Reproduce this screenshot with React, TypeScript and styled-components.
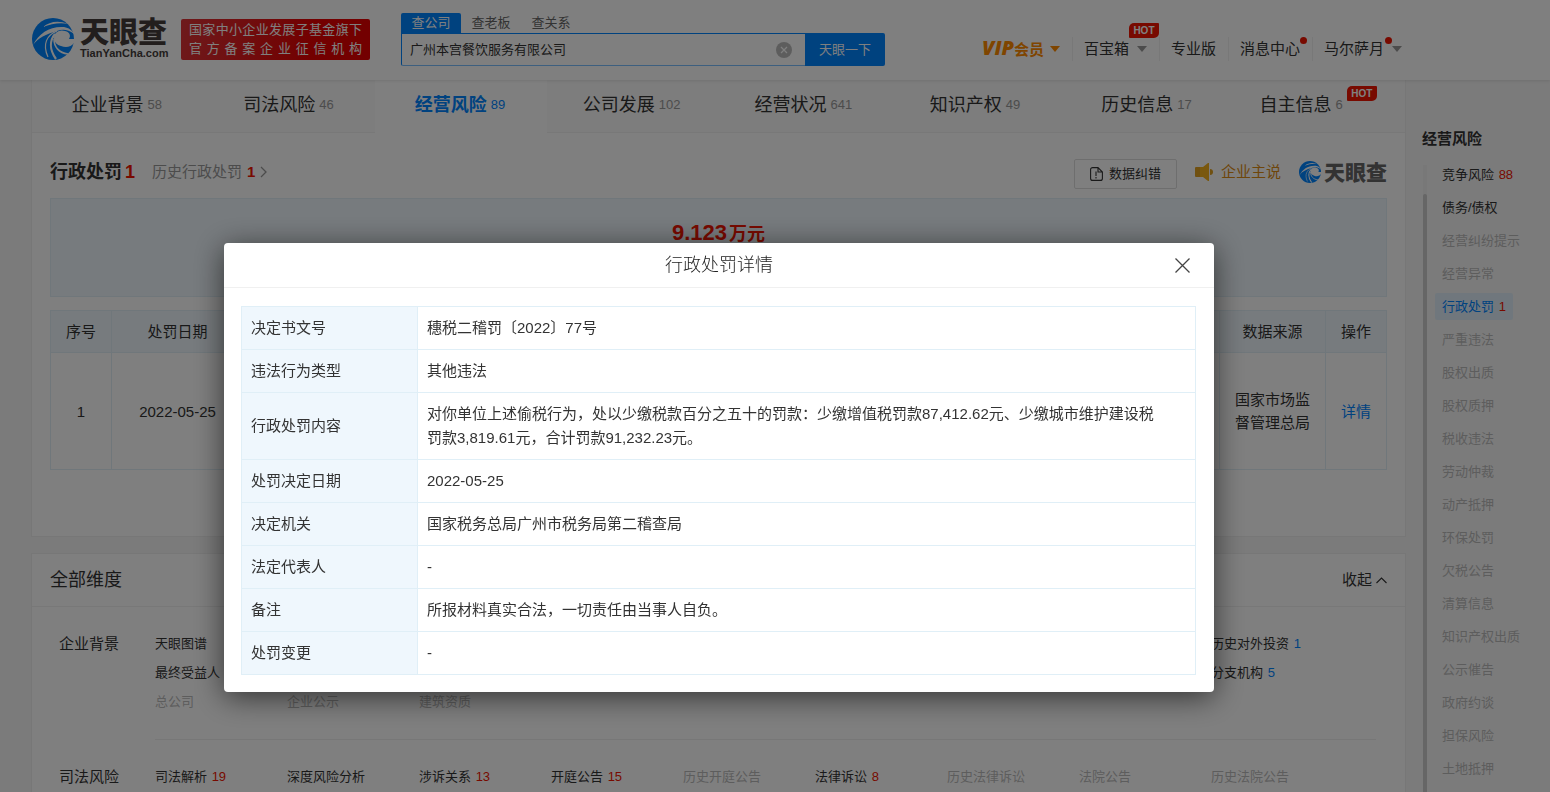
import React from "react";
import styled, { createGlobalStyle, css } from "styled-components";

const GlobalStyle = createGlobalStyle`
  *, *::before, *::after { box-sizing: border-box; }
  body {
    margin: 0;
    overflow: hidden;
    background: #f6f6f6;
    color: #333;
    font-family: "Liberation Sans", "Noto Sans CJK SC", sans-serif;
    font-size: 15px;
    line-height: 24px;
  }
  button, input { font: inherit; color: inherit; margin: 0; padding: 0; border: 0; background: none; }
  button { cursor: pointer; }
  a { color: inherit; text-decoration: none; }
  ul { list-style: none; margin: 0; padding: 0; }
  h1, h2, h3 { margin: 0; font-weight: 400; }
  svg { display: block; flex: none; }
`;

const blue = "#0084ff";
const red = "#f01400";
const line = "#e0eff7";
const tint = "#eff7fd";

const Page = styled.div`
  height: 100vh;
  overflow: hidden;
`;

/* ---------- header ---------- */

const Header = styled.header`
  position: relative;
  z-index: 2;
  display: flex;
  height: 80px;
  padding: 0 144px 0 32px;
  background: #fff;
  box-shadow: 0 1px 3px rgba(0, 0, 0, 0.1);
`;

const Brand = styled.a`
  display: flex;
  align-items: flex-start;
  gap: 6px;
  width: 149px;
  padding-top: 18px;
`;

const BrandText = styled.span`
  display: flex;
  flex-direction: column;
  gap: 5px;
`;

const BrandName = styled.span<{ $small?: boolean }>`
  color: ${(p) => (p.$small ? "#666" : "#443c3a")};
  font-family: "Noto Sans CJK SC", sans-serif;
  font-weight: 900;
  font-size: ${(p) => (p.$small ? 21 : 29)}px;
  line-height: ${(p) => (p.$small ? 20 : 24)}px;
  white-space: nowrap;
`;

const BrandDomain = styled.span`
  color: #443c3a;
  font-weight: 700;
  font-size: 11px;
  line-height: 12px;
`;

const Slogan = styled.div`
  width: 189px;
  height: 41px;
  margin-top: 19px;
  padding: 1px 8px;
  border-radius: 2px;
  background: linear-gradient(100deg, #dc3438, #e60000 70%);
  color: #fff;
  font-size: 13px;
  line-height: 19px;
  text-align-last: justify;
`;

const Search = styled.form`
  width: 484px;
  margin-left: 31px;
  padding-top: 13px;
`;

const SearchTabs = styled.div`
  display: flex;
`;

const SearchTab = styled.button<{ $active?: boolean }>`
  width: 60px;
  height: 20px;
  border-radius: 2px 2px 0 0;
  font-size: 13px;
  line-height: 20px;
  color: ${(p) => (p.$active ? "#fff" : "#666")};
  background: ${(p) => (p.$active ? blue : "transparent")};
`;

const SearchRow = styled.div`
  display: flex;
  height: 33px;
`;

const SearchField = styled.div`
  display: flex;
  flex: 1;
  align-items: center;
  padding: 0 13px 0 8px;
  border: 1px solid ${blue};
  border-right: 0;
  border-bottom-color: #7abfff;
  border-radius: 0 0 0 2px;
`;

const SearchInput = styled.input`
  flex: 1;
  min-width: 0;
  outline: 0;
  font-size: 13px;
`;

const SearchSubmit = styled.button`
  width: 80px;
  border-radius: 0 2px 2px 0;
  background: ${blue};
  color: #fff;
  font-size: 13px;
`;

const Nav = styled.nav`
  display: flex;
  align-items: center;
  height: 24px;
  margin: 37px 4px 0 auto;
`;

const NavLink = styled.a<{ $vip?: boolean }>`
  position: relative;
  display: flex;
  align-items: center;
  gap: 8px;
  padding: 0 12px 0 11px;
  white-space: nowrap;
  & + & { border-left: 1px solid #f0f0f0; }
  &:last-child { padding-right: 0; }
  ${(p) => p.$vip && css`
    color: #ff8a00;
    font-weight: 700;
    gap: 6px;
    i { font: italic 800 20px/24px "Open Sans", sans-serif; }
  `}
`;

const Caret = styled.span`
  border: 5px solid transparent;
  border-top: 6px solid currentColor;
  border-bottom: 0;
  &.grey { color: #999; }
`;

const hot = css`
  width: 30px;
  height: 15px;
  border-radius: 5px 1px 5px 1px;
  background: ${red};
  color: #fff;
  font-weight: 700;
  font-size: 10px;
  line-height: 15px;
  text-align: center;
`;

const NavHot = styled.span`
  ${hot}
  position: absolute;
  top: -14px;
  right: 0;
`;

const Dot = styled.span<{ $inset?: boolean }>`
  position: absolute;
  top: 0;
  right: ${(p) => (p.$inset ? 10 : 5)}px;
  width: 7px;
  height: 7px;
  border-radius: 50%;
  background: ${red};
`;

/* ---------- page body ---------- */

const Body = styled.div`
  display: flex;
  padding-left: 31px;
`;

const Main = styled.main`
  flex: 1;
  min-width: 0;
`;

const Card = styled.section`
  border: 1px solid #efefef;
  border-top-width: 0;
  background: #fff;
  & + & { margin-top: 16px; border-top-width: 1px; }
`;

const Tabs = styled.nav`
  display: grid;
  grid-template-columns: repeat(8, 1fr);
  height: 53px;
`;

const Tab = styled.a<{ $active?: boolean }>`
  display: flex;
  align-items: flex-start;
  justify-content: center;
  gap: 4px;
  padding: 13px 2px 0 0;
  border-bottom: 1px solid ${(p) => (p.$active ? "#fff" : "#f0f0f0")};
  background: ${(p) => (p.$active ? "#fff" : "#fafafa")};
  color: ${(p) => (p.$active ? blue : "#333")};
  font-size: 18px;
  font-weight: ${(p) => (p.$active ? 700 : 400)};
  white-space: nowrap;
  small {
    color: ${(p) => (p.$active ? blue : "#999")};
    font-size: 13px;
    font-weight: 400;
  }
`;

const TabHot = styled.span`
  ${hot}
  margin-top: -7px;
`;

const Penalty = styled.div`
  height: 403px;
  padding: 24px 18px 0;
`;

const TitleRow = styled.div`
  display: flex;
  align-items: center;
  height: 30px;
  white-space: nowrap;
`;

const Title = styled.h2`
  display: flex;
  gap: 3px;
  font-size: 18px;
  font-weight: 700;
`;

const Num = styled.span<{ $tone?: "blue" | "red" }>`
  color: ${(p) => (p.$tone === "blue" ? blue : red)};
`;

const HistoryLink = styled.a`
  display: flex;
  align-items: center;
  gap: 5px;
  margin-left: 17px;
  color: #999;
  ${Num} { font-weight: 700; }
`;

const Tools = styled.div`
  display: flex;
  align-items: center;
  margin-left: auto;
`;

const FixButton = styled.button`
  display: flex;
  align-items: center;
  justify-content: center;
  gap: 6px;
  width: 103px;
  height: 30px;
  margin-top: 4px;
  border: 1px solid #ddd;
  border-radius: 2px;
  font-size: 13px;
`;

const OwnerLink = styled.a`
  display: flex;
  align-items: center;
  gap: 8px;
  margin: 0 18px;
  color: #dc8c14;
`;

const MiniBrand = styled.span`
  display: flex;
  align-items: flex-start;
  gap: 3px;
`;

const Amount = styled.div`
  height: 99px;
  margin-top: 11px;
  padding-top: 20px;
  border: 1px solid ${line};
  background: ${tint};
  color: ${red};
  font-weight: 700;
  font-size: 18px;
  line-height: 28px;
  text-align: center;
  b { margin-right: 2px; font-size: 22px; }
`;

const PenaltyTable = styled.table`
  width: 100%;
  margin-top: 13px;
  border-collapse: collapse;
  table-layout: fixed;
  text-align: center;
  th, td {
    padding: 0;
    border: 1px solid ${line};
    font-weight: 400;
  }
  th { height: 42px; background: ${tint}; }
  td { height: 117px; line-height: 23px; }
  td:nth-child(4) { padding: 0 12px; }
`;

const Col = styled.col<{ $width?: number }>`
  width: ${(p) => (p.$width ? `${p.$width}px` : "auto")};
`;

const DetailLink = styled.a`
  color: ${blue};
`;

const DimensionHead = styled.div`
  display: flex;
  align-items: center;
  justify-content: space-between;
  height: 53px;
  padding: 0 18px;
  border-bottom: 1px solid #f0f0f0;
  h2 { font-size: 18px; }
`;

const Collapse = styled.button`
  display: flex;
  align-items: center;
  gap: 4px;
`;

const DimensionRow = styled.div`
  display: flex;
  padding: 22px 29px 0 27px;
  h3 { width: 96px; font-size: 15px; line-height: 29px; }
`;

const DimensionGrid = styled.ul`
  display: grid;
  flex: 1;
  grid-template-columns: repeat(9, 1fr);
  grid-auto-rows: 29px;
  padding: 0 33px 23px 0;
  border-bottom: 1px solid #eee;
  font-size: 13px;
  line-height: 29px;
  white-space: nowrap;
  ${Num} { margin-left: 1px; }
`;

const DimensionItem = styled.li<{ $col: number; $row: number; $off?: boolean }>`
  grid-column: ${(p) => p.$col};
  grid-row: ${(p) => p.$row};
  color: ${(p) => (p.$off ? "#bbb" : "#333")};
`;

/* ---------- side index ---------- */

const Aside = styled.aside`
  width: 144px;
  padding: 47px 0 0 16px;
  h2 { font-size: 15px; font-weight: 700; }
`;

const SideBody = styled.div`
  display: flex;
  gap: 8px;
  margin-top: 14px;
`;

const Rail = styled.div`
  width: 4px;
  margin-left: 1px;
  padding-top: 29px;
  background: #f0f0f0;
  &::before {
    content: "";
    display: block;
    height: 100%;
    border-radius: 2px;
    background: #ccc;
  }
`;

const SideList = styled.ul`
  margin-top: -7px;
  padding-bottom: 40px;
  font-size: 13px;
  white-space: nowrap;
`;

const SideItem = styled.li<{ $state?: "off" | "active" }>`
  padding: 3px 0;
  a {
    display: inline-block;
    height: 27px;
    padding: 0 7px;
    border-radius: 2px;
    line-height: 27px;
    color: ${(p) => (p.$state === "off" ? "#bbb" : p.$state === "active" ? blue : "#333")};
    background: ${(p) => (p.$state === "active" ? "#e1effa" : "transparent")};
  }
  ${Num} { margin-left: 1px; }
`;

/* ---------- dialog ---------- */

const Overlay = styled.div`
  position: fixed;
  inset: 0;
  z-index: 10;
  padding: 243px 112px 0 0;
  background: rgba(0, 0, 0, 0.5);
`;

const Dialog = styled.div`
  width: 990px;
  max-width: 100%;
  margin: 0 auto;
  border-radius: 4px;
  background: #fff;
  box-shadow: 0 5px 30px rgba(0, 0, 0, 0.6);
`;

const DialogHead = styled.div`
  display: grid;
  grid-template-columns: 1fr auto 1fr;
  align-items: center;
  height: 45px;
  padding: 0 24px;
  border-bottom: 1px solid #f0f0f0;
  h1 { grid-column: 2; color: #222; font-size: 18px; font-weight: 300; }
`;

const Close = styled.button`
  justify-self: end;
`;

const DialogBody = styled.div`
  padding: 18px 18px 17px 17px;
`;

const DetailTable = styled.table`
  width: 100%;
  border-collapse: collapse;
  table-layout: fixed;
  th, td {
    padding: 9px;
    border: 1px solid ${line};
    font-weight: 400;
    text-align: left;
    white-space: pre-line;
  }
  th { width: 176px; background: ${tint}; }
`;

const LogoMark = ({ size }: { size: number }) => (
  <svg width={size} height={size} viewBox="0 0 42 42" aria-hidden="true">
    <circle cx="21" cy="21" r="21" fill={blue} />
    <path d="M11 9C17 4 26 2 36 6 28 4 19 6 11 9z" fill="#fff" />
    <path d="M1 27C7 15 18 8 32 9 37 10 40 12 42 16 36 11 30 11 25 13 14 16 6 20 1 27z" fill="#fff" />
    <path d="M22 20C22 14 28 11 33 13 38 14 39 18 37 21H42V25C39 29 34 30 29 28 25 27 22 24 22 20z" fill="#fff" />
    <path d="M25 13C15 17 10 26 16 39" fill="none" stroke="#fff" strokeWidth="1.2" />
    <path d="M23 16C18 22 17 31 24 41" fill="none" stroke="#fff" strokeWidth="2.2" />
    <path d="M22 21C22 29 27 35 36 36" fill="none" stroke="#fff" strokeWidth="1.6" />
  </svg>
);

const background: [number, number, string, boolean, number?][] = [
  [1, 1, "天眼图谱", false],
  [9, 1, "历史对外投资", false, 1],
  [1, 2, "最终受益人", false],
  [9, 2, "分支机构", false, 5],
  [1, 3, "总公司", true],
  [2, 3, "企业公示", true],
  [3, 3, "建筑资质", true],
];

const judicial: [number, number, string, boolean, number?][] = [
  [1, 1, "司法解析", false, 19],
  [2, 1, "深度风险分析", false],
  [3, 1, "涉诉关系", false, 13],
  [4, 1, "开庭公告", false, 15],
  [5, 1, "历史开庭公告", true],
  [6, 1, "法律诉讼", false, 8],
  [7, 1, "历史法律诉讼", true],
  [8, 1, "法院公告", true],
  [9, 1, "历史法院公告", true],
];

const tabs: [string, number][] = [
  ["企业背景", 58],
  ["司法风险", 46],
  ["经营风险", 89],
  ["公司发展", 102],
  ["经营状况", 641],
  ["知识产权", 49],
  ["历史信息", 17],
  ["自主信息", 6],
];

const sideOff = [
  "严重违法", "股权出质", "股权质押", "税收违法", "劳动仲裁", "动产抵押", "环保处罚",
  "欠税公告", "清算信息", "知识产权出质", "公示催告", "政府约谈", "担保风险", "土地抵押",
];

const details: [string, string][] = [
  ["决定书文号", "穗税二稽罚〔2022〕77号"],
  ["违法行为类型", "其他违法"],
  ["行政处罚内容", "对你单位上述偷税行为，处以少缴税款百分之五十的罚款：少缴增值税罚款87,412.62元、少缴城市维护建设税\n罚款3,819.61元，合计罚款91,232.23元。"],
  ["处罚决定日期", "2022-05-25"],
  ["决定机关", "国家税务总局广州市税务局第二稽查局"],
  ["法定代表人", "-"],
  ["备注", "所报材料真实合法，一切责任由当事人自负。"],
  ["处罚变更", "-"],
];

const Dimensions = ({ name, items, tone }: { name: string; items: typeof background; tone: "blue" | "red" }) => (
  <DimensionRow>
    <h3>{name}</h3>
    <DimensionGrid>
      {items.map(([col, row, text, off, count]) => (
        <DimensionItem key={text} $col={col} $row={row} $off={off}>
          <a href="#">{text}{count && <Num $tone={tone}> {count}</Num>}</a>
        </DimensionItem>
      ))}
    </DimensionGrid>
  </DimensionRow>
);

export default function App() {
  return (
    <Page>
      <GlobalStyle />
      <Header>
        <Brand href="#">
          <LogoMark size={42} />
          <BrandText>
            <BrandName>天眼查</BrandName>
            <BrandDomain>TianYanCha.com</BrandDomain>
          </BrandText>
        </Brand>
        <Slogan>
          <div>国家中小企业发展子基金旗下</div>
          <div>官方备案企业征信机构</div>
        </Slogan>
        <Search onSubmit={(e) => e.preventDefault()}>
          <SearchTabs>
            <SearchTab type="button" $active>查公司</SearchTab>
            <SearchTab type="button">查老板</SearchTab>
            <SearchTab type="button">查关系</SearchTab>
          </SearchTabs>
          <SearchRow>
            <SearchField>
              <SearchInput aria-label="查公司" defaultValue="广州本宫餐饮服务有限公司" />
              <button type="button" aria-label="清除">
                <svg width="16" height="16" viewBox="0 0 16 16">
                  <circle cx="8" cy="8" r="8" fill="#bbb" />
                  <path d="M5 5l6 6M11 5l-6 6" stroke="#fff" strokeWidth="1.2" />
                </svg>
              </button>
            </SearchField>
            <SearchSubmit type="submit">天眼一下</SearchSubmit>
          </SearchRow>
        </Search>
        <Nav>
          <NavLink href="#" $vip><span><i>VIP</i>会员</span><Caret /></NavLink>
          <NavLink href="#">百宝箱<Caret className="grey" /><NavHot>HOT</NavHot></NavLink>
          <NavLink href="#">专业版</NavLink>
          <NavLink href="#">消息中心<Dot /></NavLink>
          <NavLink href="#">马尔萨月<Caret className="grey" /><Dot $inset /></NavLink>
        </Nav>
      </Header>

      <Body>
        <Main>
          <Card>
            <Tabs>
              {tabs.map(([name, count]) => (
                <Tab key={name} href="#" $active={name === "经营风险"}>
                  {name}<small>{count}</small>
                  {name === "自主信息" && <TabHot>HOT</TabHot>}
                </Tab>
              ))}
            </Tabs>
            <Penalty>
              <TitleRow>
                <Title>行政处罚<Num>1</Num></Title>
                <HistoryLink href="#">
                  历史行政处罚 <Num>1</Num>
                  <svg width="7" height="12" viewBox="0 0 7 12" fill="none" stroke="#999" strokeWidth="1.3"><path d="M1 1l5 5-5 5" /></svg>
                </HistoryLink>
                <Tools>
                  <FixButton type="button">
                    <svg width="13" height="14" viewBox="0 0 13 14" fill="none" stroke="#333" strokeWidth="1.1">
                      <path d="M8 .6H2.600a2 2 0 0 0-2 2v8.800a2 2 0 0 0 2 2h7.800a2 2 0 0 0 2-2V5zM8 .6V5h4.400M6 4.500v4.500M6 10v1.500" />
                    </svg>
                    数据纠错
                  </FixButton>
                  <OwnerLink href="#">
                    <svg width="18" height="18" viewBox="0 0 18 18">
                      <path d="M1 4h4v10H1a1 1 0 0 1-1-1V5a1 1 0 0 1 1-1z" fill="#e0a020" />
                      <path d="M5 4h3l5-4h1v18h-1l-5-4H5z" fill="#f5b01c" />
                      <path d="M15 6a3 3 0 0 1 0 6z" fill="#e0a020" />
                    </svg>
                    企业主说
                  </OwnerLink>
                  <MiniBrand><LogoMark size={22} /><BrandName $small>天眼查</BrandName></MiniBrand>
                </Tools>
              </TitleRow>
              <Amount><b>9.123</b>万元</Amount>
              <PenaltyTable>
                <colgroup>
                  <Col $width={61} /><Col $width={132} /><Col /><Col $width={106} /><Col $width={61} />
                </colgroup>
                <thead>
                  <tr><th>序号</th><th>处罚日期</th><th /><th>数据来源</th><th>操作</th></tr>
                </thead>
                <tbody>
                  <tr>
                    <td>1</td><td>2022-05-25</td><td /><td>国家市场监督管理总局</td>
                    <td><DetailLink href="#">详情</DetailLink></td>
                  </tr>
                </tbody>
              </PenaltyTable>
            </Penalty>
          </Card>

          <Card>
            <DimensionHead>
              <h2>全部维度</h2>
              <Collapse type="button">
                收起
                <svg width="11" height="7" viewBox="0 0 11 7" fill="none" stroke="#333" strokeWidth="1.1"><path d="M.5 6l5-5 5 5" /></svg>
              </Collapse>
            </DimensionHead>
            <Dimensions name="企业背景" items={background} tone="blue" />
            <Dimensions name="司法风险" items={judicial} tone="red" />
          </Card>
        </Main>

        <Aside>
          <h2>经营风险</h2>
          <SideBody>
            <Rail />
            <SideList>
              <SideItem><a href="#">竞争风险 <Num>88</Num></a></SideItem>
              <SideItem><a href="#">债务/债权</a></SideItem>
              <SideItem $state="off"><a href="#">经营纠纷提示</a></SideItem>
              <SideItem $state="off"><a href="#">经营异常</a></SideItem>
              <SideItem $state="active"><a href="#">行政处罚 <Num>1</Num></a></SideItem>
              {sideOff.map((name) => (
                <SideItem key={name} $state="off"><a href="#">{name}</a></SideItem>
              ))}
            </SideList>
          </SideBody>
        </Aside>
      </Body>

      <Overlay>
        <Dialog role="dialog" aria-modal="true" aria-labelledby="dialog-title">
          <DialogHead>
            <h1 id="dialog-title">行政处罚详情</h1>
            <Close type="button" aria-label="关闭">
              <svg width="15" height="15" viewBox="0 0 15 15" stroke="#444" strokeWidth="1.3"><path d="M.5.5l14 14M14.500.5l-14 14" /></svg>
            </Close>
          </DialogHead>
          <DialogBody>
            <DetailTable>
              <tbody>
                {details.map(([label, value]) => (
                  <tr key={label}><th scope="row">{label}</th><td>{value}</td></tr>
                ))}
              </tbody>
            </DetailTable>
          </DialogBody>
        </Dialog>
      </Overlay>
    </Page>
  );
}
